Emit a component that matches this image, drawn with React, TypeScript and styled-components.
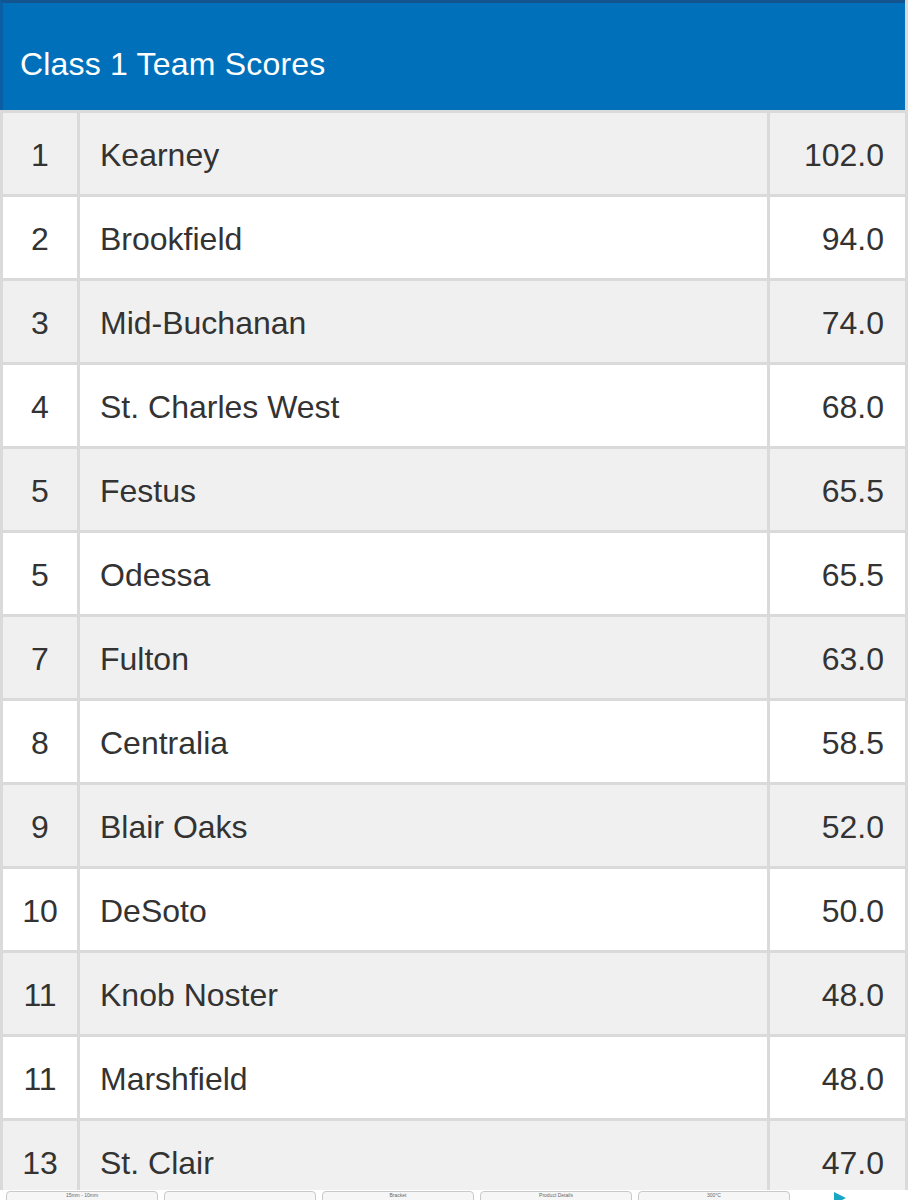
import React from "react";
import styled, { createGlobalStyle } from "styled-components";

const GlobalStyle = createGlobalStyle`
  html, body {
    margin: 0;
    padding: 0;
    background: #ffffff;
  }
  body {
    font-family: "Liberation Sans", Arial, Helvetica, sans-serif;
  }
`;

interface TeamScore {
  place: number;
  team: string;
  score: string;
}

const scores: TeamScore[] = [
  { place: 1, team: "Kearney", score: "102.0" },
  { place: 2, team: "Brookfield", score: "94.0" },
  { place: 3, team: "Mid-Buchanan", score: "74.0" },
  { place: 4, team: "St. Charles West", score: "68.0" },
  { place: 5, team: "Festus", score: "65.5" },
  { place: 5, team: "Odessa", score: "65.5" },
  { place: 7, team: "Fulton", score: "63.0" },
  { place: 8, team: "Centralia", score: "58.5" },
  { place: 9, team: "Blair Oaks", score: "52.0" },
  { place: 10, team: "DeSoto", score: "50.0" },
  { place: 11, team: "Knob Noster", score: "48.0" },
  { place: 11, team: "Marshfield", score: "48.0" },
  { place: 13, team: "St. Clair", score: "47.0" },
];

const thumbs = ["15mm - 10mm", "", "Bracket", "Product Details", "300°C"];

const Page = styled.div`
  position: relative;
  width: 908px;
  height: 1200px;
  overflow: hidden;
`;

const Panel = styled.div`
  border-left: 3px solid #dadada;
  border-right: 3px solid #dadada;
  background: #dadada;
`;

const Header = styled.div`
  height: 110px;
  border-top: 3px solid #15558f;
  background: #0070bb;
  display: flex;
  align-items: center;
  padding: 16px 0 0 17px;
  box-sizing: border-box;
  margin-left: -3px;
  border-left: 3px solid #0a5ea4;
  color: #ffffff;
  font-size: 32px;
  letter-spacing: 0.2px;
`;

const Table = styled.div`
  display: grid;
  grid-template-columns: 74px 687px 135px;
  column-gap: 3px;
  row-gap: 3px;
  padding-top: 3px;
`;

const Cell = styled.div<{ $striped: boolean; $align: "center" | "left" | "right" }>`
  height: 81px;
  background: ${(p) => (p.$striped ? "#f0f0f0" : "#ffffff")};
  color: #333333;
  font-size: 32px;
  display: flex;
  align-items: center;
  padding-top: 4px;
  box-sizing: border-box;
  justify-content: ${(p) =>
    p.$align === "center" ? "center" : p.$align === "right" ? "flex-end" : "flex-start"};
  padding-left: ${(p) => (p.$align === "left" ? "20px" : "0")};
  padding-right: ${(p) => (p.$align === "right" ? "21px" : "0")};
`;

const Dock = styled.div`
  position: absolute;
  left: 0;
  right: 0;
  bottom: 0;
  height: 10px;
  background: #ffffff;
  display: flex;
  gap: 6px;
  padding: 1px 0 0 6px;
  box-sizing: border-box;
`;

const Thumb = styled.div`
  width: 150px;
  height: 12px;
  border: 1px solid #c9c9c9;
  border-radius: 4px;
  background: #f6f6f6;
  font-size: 5px;
  color: #666;
  text-align: center;
  line-height: 6px;
  overflow: hidden;
`;

const Play = styled.div`
  margin-left: 38px;
  width: 0;
  height: 0;
  border-left: 12px solid #1aa7c4;
  border-top: 6px solid transparent;
  border-bottom: 6px solid transparent;
  margin-top: 1px;
`;

export default function App() {
  return (
    <Page>
      <GlobalStyle />
      <Panel>
        <Header>Class 1 Team Scores</Header>
        <Table>
          {scores.map((row, i) => {
            const striped = i % 2 === 0;
            return (
              <React.Fragment key={i}>
                <Cell $striped={striped} $align="center">
                  {row.place}
                </Cell>
                <Cell $striped={striped} $align="left">
                  {row.team}
                </Cell>
                <Cell $striped={striped} $align="right">
                  {row.score}
                </Cell>
              </React.Fragment>
            );
          })}
        </Table>
      </Panel>
      <Dock>
        {thumbs.map((t, i) => (
          <Thumb key={i}>{t}</Thumb>
        ))}
        <Play />
      </Dock>
    </Page>
  );
}
